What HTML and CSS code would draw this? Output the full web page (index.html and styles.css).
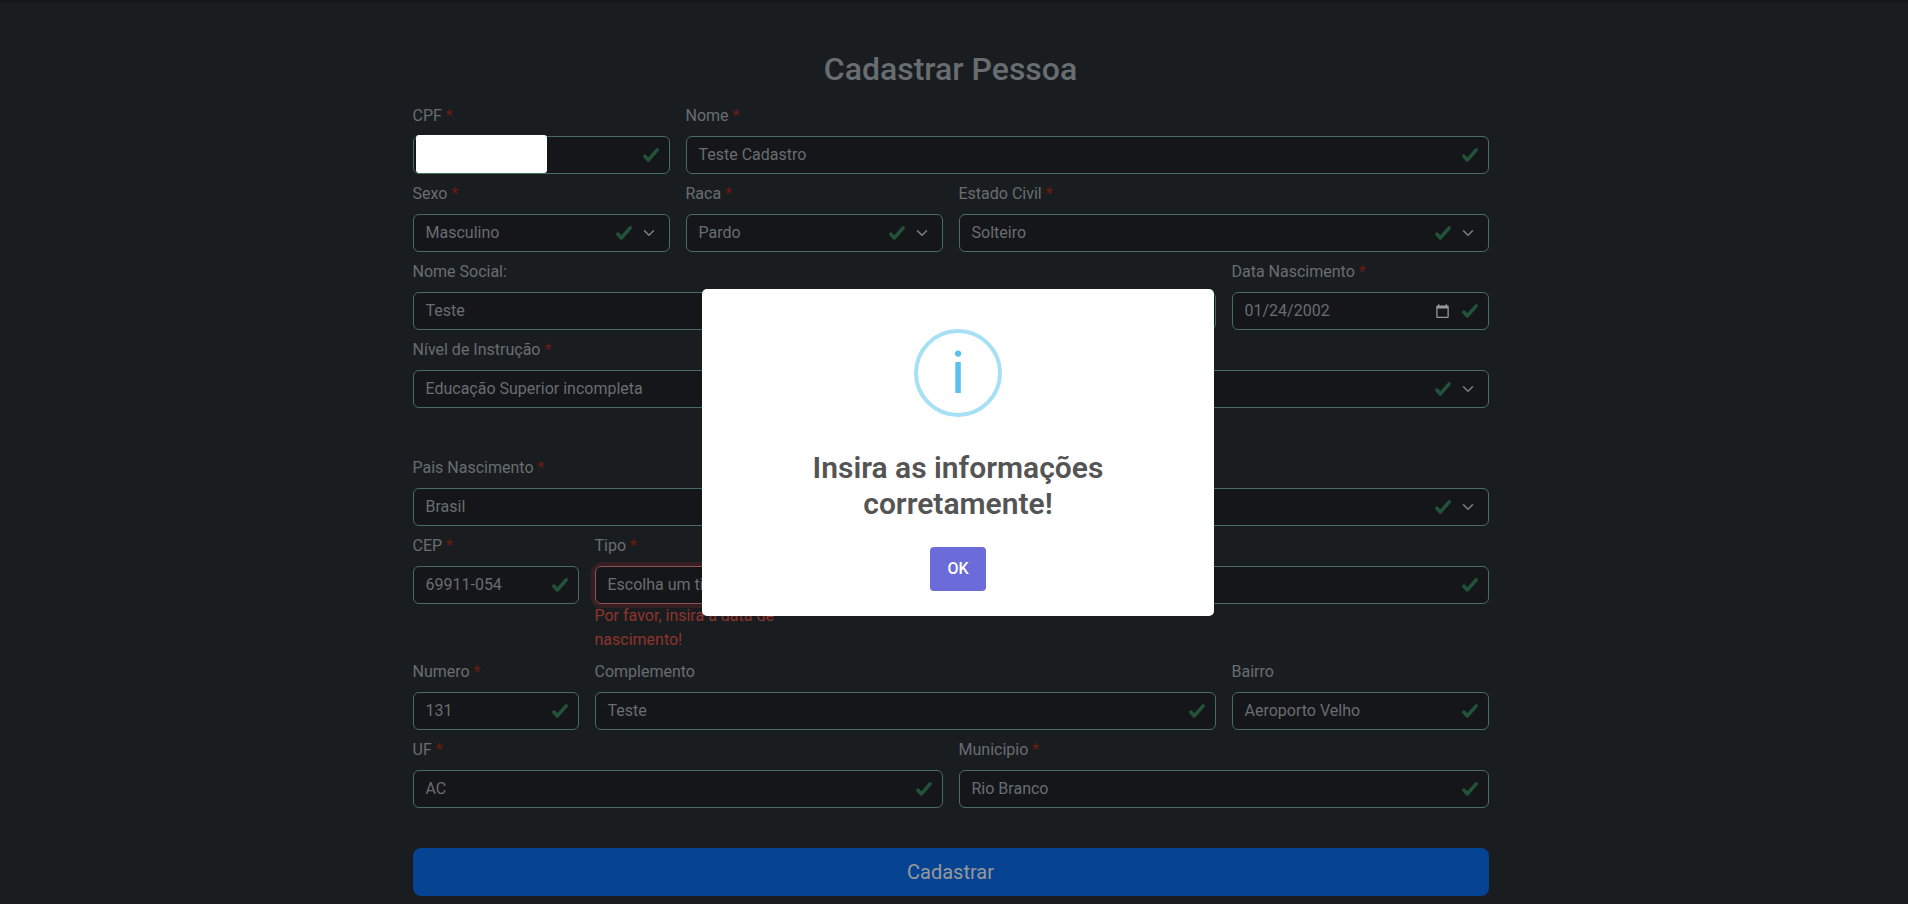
FILE: index.html
```html
<!DOCTYPE html>
<html lang="pt-BR">
<head>
<meta charset="utf-8">
<title>Cadastrar Pessoa</title>
<link rel="stylesheet" href="styles.css">
</head>
<body>
<svg width="0" height="0" class="defs">
  <symbol id="check" viewBox="0 0 18 18"><path fill="none" stroke="currentColor" stroke-width="3.5" stroke-linecap="round" stroke-linejoin="round" d="M2.8 10 L6.3 14 L15.2 3.9"/></symbol>
  <symbol id="chevron" viewBox="0 0 16 16"><path fill="none" stroke="currentColor" stroke-linecap="round" stroke-linejoin="round" stroke-width="2" d="m2 5 6 6 6-6"/></symbol>
  <symbol id="calendar" viewBox="0 0 24 24"><path d="M20 3h-1V1h-2v2H7V1H5v2H4c-1.1 0-2 .9-2 2v16c0 1.1.9 2 2 2h16c1.1 0 2-.9 2-2V5c0-1.1-.9-2-2-2zm0 18H4V8h16v13z"/></symbol>
</svg>
<main class="page">
  <h1 class="title">Cadastrar Pessoa</h1>
  <form class="form">
    <div class="field span-3"><label class="label">CPF <b class="req">*</b></label><div class="control"><span class="mask"></span><svg class="check"><use href="#check"/></svg></div></div>
    <div class="field span-9"><label class="label">Nome <b class="req">*</b></label><div class="control"><span class="value">Teste Cadastro</span><svg class="check"><use href="#check"/></svg></div></div>

    <div class="field span-3"><label class="label">Sexo <b class="req">*</b></label><div class="control select"><span class="value">Masculino</span><svg class="check"><use href="#check"/></svg><svg class="chevron"><use href="#chevron"/></svg></div></div>
    <div class="field span-3"><label class="label">Raca <b class="req">*</b></label><div class="control select"><span class="value">Pardo</span><svg class="check"><use href="#check"/></svg><svg class="chevron"><use href="#chevron"/></svg></div></div>
    <div class="field span-6"><label class="label">Estado Civil <b class="req">*</b></label><div class="control select"><span class="value">Solteiro</span><svg class="check"><use href="#check"/></svg><svg class="chevron"><use href="#chevron"/></svg></div></div>

    <div class="field span-9"><label class="label">Nome Social:</label><div class="control"><span class="value">Teste</span></div></div>
    <div class="field span-3"><label class="label">Data Nascimento <b class="req">*</b></label><div class="control"><span class="value">01/24/2002</span><svg class="calendar"><use href="#calendar"/></svg><svg class="check"><use href="#check"/></svg></div></div>

    <div class="field span-12 spaced"><label class="label">Nível de Instrução <b class="req">*</b></label><div class="control select"><span class="value">Educação Superior incompleta</span><svg class="check"><use href="#check"/></svg><svg class="chevron"><use href="#chevron"/></svg></div></div>

    <div class="field span-12"><label class="label">Pais Nascimento <b class="req">*</b></label><div class="control select"><span class="value">Brasil</span><svg class="check"><use href="#check"/></svg><svg class="chevron"><use href="#chevron"/></svg></div></div>

    <div class="field span-2"><label class="label">CEP <b class="req">*</b></label><div class="control"><span class="value">69911-054</span><svg class="check"><use href="#check"/></svg></div></div>
    <div class="field span-3"><label class="label">Tipo <b class="req">*</b></label><div class="control invalid"><span class="value">Escolha um tipo</span></div><span class="error">Por favor, insira a data de nascimento!</span></div>
    <div class="field span-7"><div class="label"></div><div class="control"><span class="value"></span><svg class="check"><use href="#check"/></svg></div></div>

    <div class="field span-2"><label class="label">Numero <b class="req">*</b></label><div class="control"><span class="value">131</span><svg class="check"><use href="#check"/></svg></div></div>
    <div class="field span-7"><label class="label">Complemento</label><div class="control"><span class="value">Teste</span><svg class="check"><use href="#check"/></svg></div></div>
    <div class="field span-3"><label class="label">Bairro</label><div class="control"><span class="value">Aeroporto Velho</span><svg class="check"><use href="#check"/></svg></div></div>

    <div class="field span-6"><label class="label">UF <b class="req">*</b></label><div class="control"><span class="value">AC</span><svg class="check"><use href="#check"/></svg></div></div>
    <div class="field span-6"><label class="label">Municipio <b class="req">*</b></label><div class="control"><span class="value">Rio Branco</span><svg class="check"><use href="#check"/></svg></div></div>

    <button class="submit" type="button">Cadastrar</button>
  </form>
</main>
<section class="dialog" role="dialog">
  <div class="icon">i</div>
  <h2 class="message">Insira as informações corretamente!</h2>
  <button class="ok" type="button">OK</button>
</section>
</body>
</html>
```

FILE: styles.css
```css
* { box-sizing: border-box; }
html, body { margin: 0; height: 100%; overflow: hidden; }
body {
  background: #1a1d20;
  color: #686d71;
  font: 400 16px/24px Roboto, "Noto Sans", sans-serif;
}
.defs { position: absolute; }
.page {
  height: 904px;
  padding: 48px 0 0 412.5px;
  border-top: 2px solid #141619;
}
.title {
  width: 1076px;
  margin: 0 0 16px;
  font-size: 32px;
  font-weight: 500;
  line-height: 38px;
  text-align: center;
}
.form {
  display: grid;
  grid-template-columns: repeat(12, 75px);
  gap: 8px 16px;
  align-items: start;
}
.field { min-width: 0; }
.span-2 { grid-column: span 2; }
.span-3 { grid-column: span 3; }
.span-6 { grid-column: span 6; }
.span-7 { grid-column: span 7; }
.span-9 { grid-column: span 9; }
.span-12 { grid-column: span 12; }
.spaced { margin-bottom: 40px; }
.label { display: block; height: 24px; margin-bottom: 8px; }
.req { color: #6e1a10; font-weight: 400; }
.control {
  position: relative;
  display: flex;
  align-items: center;
  height: 38px;
  padding: 0 9px 0 12px;
  border: 1px solid #466e5b;
  border-radius: 6px;
  background: #141619;
}
.value { flex: 1; white-space: nowrap; }
.check { width: 18px; height: 18px; margin-left: auto; color: #225237; }
.select { padding-right: 12px; }
.chevron { width: 16px; height: 12px; margin-left: 8px; color: #7d8083; }
.calendar { width: 15px; height: 16px; margin-right: 11px; fill: #999; }
.mask {
  position: absolute;
  left: 2px;
  top: -2px;
  width: 131px;
  height: 38px;
  border-radius: 3px;
  background: #fff;
}
.invalid { border-color: #8c5056; box-shadow: 0 0 0 4px #361f23; }
.error { display: block; color: #8e342c; }
.submit {
  grid-column: span 12;
  height: 48px;
  margin-top: 32px;
  border: 0;
  border-radius: 8px;
  background: #064493;
  color: #999;
  font: 400 20px/30px Roboto, "Noto Sans", sans-serif;
}
.dialog {
  position: absolute;
  left: 702px;
  top: 289px;
  display: flex;
  flex-direction: column;
  align-items: center;
  width: 512px;
  height: 327px;
  padding-top: 40px;
  border-radius: 5px;
  background: #fff;
}
.icon {
  width: 88px;
  height: 88px;
  border: 4px solid #a6e0f5;
  border-radius: 50%;
  color: #5bc0ee;
  font-size: 60px;
  line-height: 80px;
  text-align: center;
}
.message {
  width: 448px;
  margin: 33px 0 0;
  padding: 0 70px;
  color: #545454;
  font-size: 30px;
  font-weight: 600;
  line-height: 36px;
  text-align: center;
}
.ok {
  width: 56px;
  height: 44px;
  margin-top: 25px;
  padding: 0;
  border: 0;
  border-radius: 4px;
  background: #6b6bd9;
  color: #fff;
  font: 500 16px/24px Roboto, "Noto Sans", sans-serif;
}
```
